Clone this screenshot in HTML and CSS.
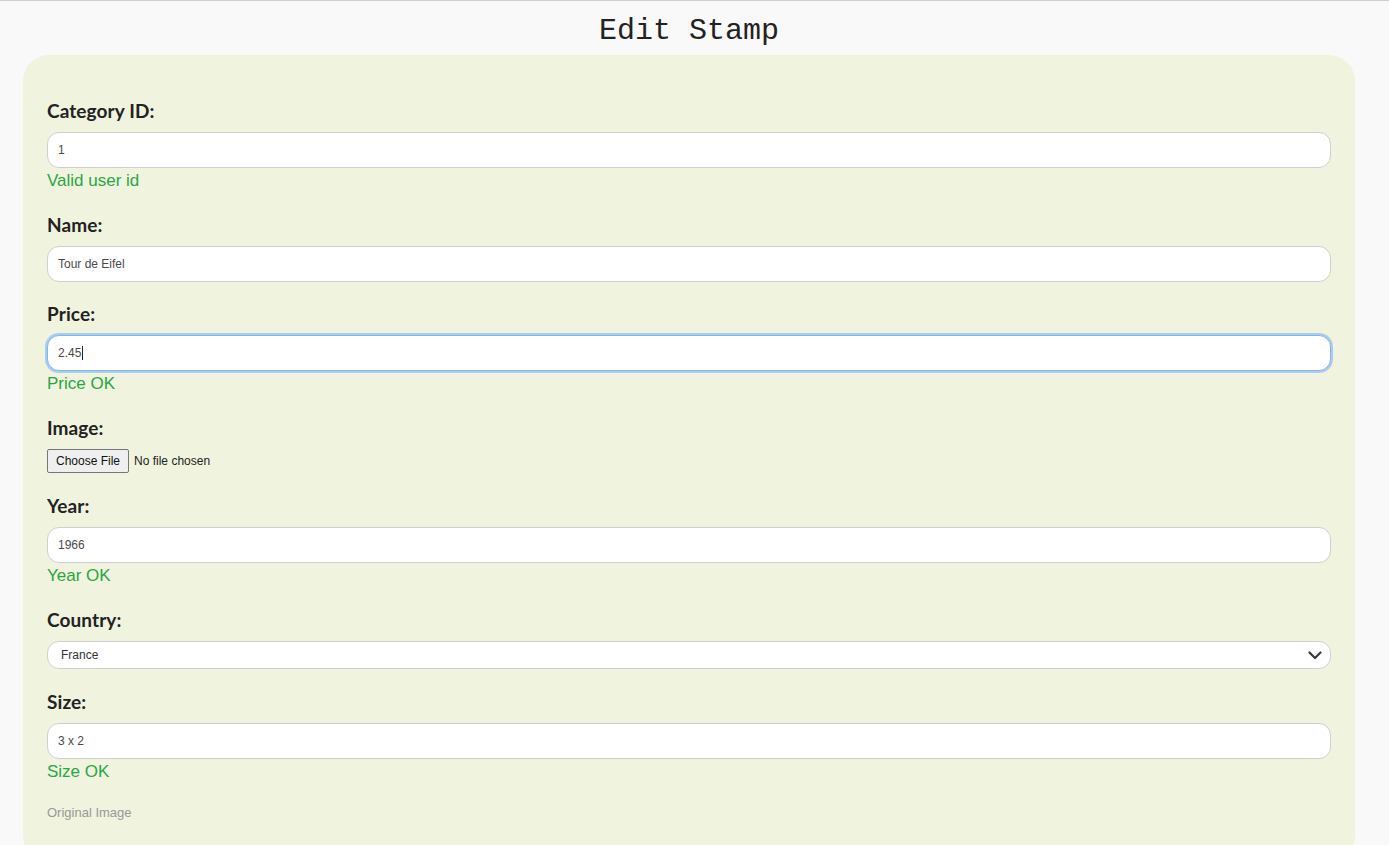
FILE: index.html
```html
<!DOCTYPE html>
<html lang="en">
<head>
<meta charset="utf-8">
<title>Edit Stamp</title>
<link rel="stylesheet" href="styles.css">
</head>
<body>
<div class="page">
  <h1 class="title">Edit Stamp</h1>
  <form class="card">
    <div class="field">
      <label class="label">Category ID:</label>
      <input class="input" type="text" value="1">
      <div class="msg">Valid user id</div>
    </div>
    <div class="field">
      <label class="label">Name:</label>
      <input class="input" type="text" value="Tour de Eifel">
    </div>
    <div class="field">
      <label class="label">Price:</label>
      <div class="input focused">2.45<span class="caret"></span></div>
      <div class="msg">Price OK</div>
    </div>
    <div class="field field-loose">
      <label class="label">Image:</label>
      <div class="file">
        <span class="file-btn">Choose File</span>
        <span class="file-text">No file chosen</span>
      </div>
    </div>
    <div class="field">
      <label class="label">Year:</label>
      <input class="input" type="text" value="1966">
      <div class="msg">Year OK</div>
    </div>
    <div class="field field-loose">
      <label class="label">Country:</label>
      <div class="select">
        <span>France</span>
        <svg class="chev" width="14" height="9" viewBox="0 0 14 9"><path d="M1.5 1.5 L7 7 L12.5 1.5" fill="none" stroke="#343a40" stroke-width="2.2" stroke-linecap="round" stroke-linejoin="round"/></svg>
      </div>
    </div>
    <div class="field">
      <label class="label">Size:</label>
      <input class="input" type="text" value="3 x 2">
      <div class="msg">Size OK</div>
    </div>
    <div class="orig">Original Image</div>
  </form>
</div>
</body>
</html>
```

FILE: styles.css
```css
html, body {
  margin: 0;
  padding: 0;
}
body {
  background: #f9f9f9;
  border-top: 1px solid #cfcfcf;
  font-family: "Liberation Sans", Arial, sans-serif;
  height: 844px;
  overflow: hidden;
}
.page {
  margin: 0 34px 0 23px;
}
.title {
  margin: 0;
  height: 54px;
  box-sizing: border-box;
  padding-top: 13px;
  text-align: center;
  font-family: "Liberation Mono", "Courier New", monospace;
  font-weight: normal;
  font-size: 30px;
  line-height: 34px;
  color: #222;
}
.card {
  display: flex;
  flex-direction: column;
  background: #f0f3de;
  border-radius: 26px;
  padding: 44px 24px 40px;
  min-height: 800px;
  box-sizing: border-box;
}
.field {
  display: flex;
  flex-direction: column;
  margin-bottom: 20px;
}
.field-loose {
  margin-bottom: 21px;
}
.label {
  font-family: "Lato", "Open Sans", sans-serif;
  font-weight: bold;
  font-size: 19px;
  letter-spacing: 0.1px;
  line-height: 24px;
  color: #222;
  margin-bottom: 9px;
}
.input {
  display: flex;
  align-items: center;
  height: 36px;
  box-sizing: border-box;
  border: 1px solid #cfcfcf;
  border-radius: 12px;
  background: #fff;
  padding: 0 10px;
  font-family: "Liberation Sans", Arial, sans-serif;
  font-size: 12px;
  color: #4a4a4a;
  outline: none;
  width: 100%;
}
.input.focused {
  border: 1px solid #86b4e6;
  box-shadow: 0 0 0 2px #a9cdee;
}
.caret {
  display: inline-block;
  width: 1px;
  height: 14px;
  background: #222;
  margin-left: 1px;
}
.msg {
  margin-top: 3px;
  margin-bottom: 2px;
  font-size: 17px;
  line-height: 20px;
  color: #28a745;
}
.file {
  display: flex;
  align-items: center;
  gap: 5px;
  font-size: 12px;
  color: #222;
}
.file-btn {
  display: flex;
  align-items: center;
  height: 24px;
  box-sizing: border-box;
  padding: 0 8px;
  border: 1px solid #767676;
  border-radius: 2px;
  background: #efefef;
  color: #111;
}
.select {
  display: flex;
  align-items: center;
  justify-content: space-between;
  height: 28px;
  box-sizing: border-box;
  border: 1px solid #d0d0d0;
  border-radius: 12px;
  background: #fff;
  padding: 0 8px 0 13px;
  font-size: 12px;
  color: #333;
}
.orig {
  margin-top: 0;
  font-size: 13px;
  line-height: 18px;
  color: #999;
}
```
